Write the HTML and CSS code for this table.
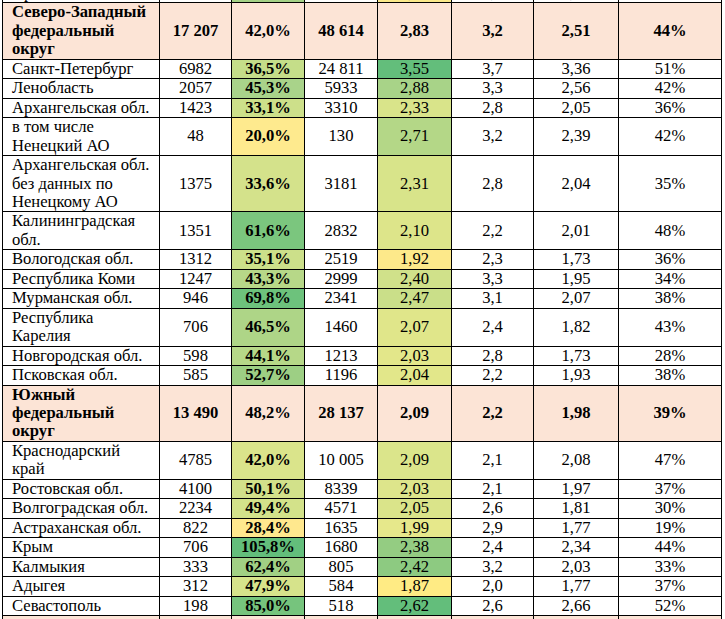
FILE: index.html
```html
<!DOCTYPE html>
<html lang="ru">
<head>
<meta charset="utf-8">
<title>Таблица</title>
<link rel="stylesheet" href="styles.css">
</head>
<body>
<table class="grid">
  <colgroup>
    <col class="c-name"><col class="c-a"><col class="c-b"><col class="c-c"><col class="c-d"><col class="c-e"><col class="c-f"><col class="c-g">
  </colgroup>
  <tbody>
    <tr>
      <td class="name">Орловская обл.</td><td>502</td><td class="pct" style="background:#a4d186">52,3%</td><td>1016</td><td style="background:#fbe98a">2,02</td><td>2,2</td><td>1,99</td><td>40%</td>
    </tr>
    <tr class="district">
      <td class="name">Северо-Западный<br>федеральный<br>округ</td><td>17 207</td><td>42,0%</td><td>48 614</td><td>2,83</td><td>3,2</td><td>2,51</td><td>44%</td>
    </tr>
    <tr>
      <td class="name">Санкт-Петербург</td><td>6982</td><td class="pct" style="background:#c5de89">36,5%</td><td>24 811</td><td style="background:#63be7b">3,55</td><td>3,7</td><td>3,36</td><td>51%</td>
    </tr>
    <tr>
      <td class="name">Ленобласть</td><td>2057</td><td class="pct" style="background:#a9d38a">45,3%</td><td>5933</td><td style="background:#a8d388">2,88</td><td>3,3</td><td>2,56</td><td>42%</td>
    </tr>
    <tr>
      <td class="name">Архангельская обл.</td><td>1423</td><td class="pct" style="background:#cde08a">33,1%</td><td>3310</td><td style="background:#d9e48a">2,33</td><td>2,8</td><td>2,05</td><td>36%</td>
    </tr>
    <tr>
      <td class="name">в том числе<br>Ненецкий АО</td><td>48</td><td class="pct" style="background:#feea8e">20,0%</td><td>130</td><td style="background:#b4d787">2,71</td><td>3,2</td><td>2,39</td><td>42%</td>
    </tr>
    <tr>
      <td class="name">Архангельская обл.<br>без данных по<br>Ненецкому АО</td><td>1375</td><td class="pct" style="background:#d4e28b">33,6%</td><td>3181</td><td style="background:#d8e48a">2,31</td><td>2,8</td><td>2,04</td><td>35%</td>
    </tr>
    <tr>
      <td class="name">Калининградская<br>обл.</td><td>1351</td><td class="pct" style="background:#7bc67e">61,6%</td><td>2832</td><td style="background:#dde58a">2,10</td><td>2,2</td><td>2,01</td><td>48%</td>
    </tr>
    <tr>
      <td class="name">Вологодская обл.</td><td>1312</td><td class="pct" style="background:#cce08a">35,1%</td><td>2519</td><td style="background:#fde98a">1,92</td><td>2,3</td><td>1,73</td><td>36%</td>
    </tr>
    <tr>
      <td class="name">Республика Коми</td><td>1247</td><td class="pct" style="background:#b7d888">43,3%</td><td>2999</td><td style="background:#d0e18a">2,40</td><td>3,3</td><td>1,95</td><td>34%</td>
    </tr>
    <tr>
      <td class="name">Мурманская обл.</td><td>946</td><td class="pct" style="background:#6dc27c">69,8%</td><td>2341</td><td style="background:#cadf89">2,47</td><td>3,1</td><td>2,07</td><td>38%</td>
    </tr>
    <tr>
      <td class="name">Республика<br>Карелия</td><td>706</td><td class="pct" style="background:#aed587">46,5%</td><td>1460</td><td style="background:#e0e68a">2,07</td><td>2,4</td><td>1,82</td><td>43%</td>
    </tr>
    <tr>
      <td class="name">Новгородская обл.</td><td>598</td><td class="pct" style="background:#b6d888">44,1%</td><td>1213</td><td style="background:#e3e78a">2,03</td><td>2,8</td><td>1,73</td><td>28%</td>
    </tr>
    <tr>
      <td class="name">Псковская обл.</td><td>585</td><td class="pct" style="background:#9dcf84">52,7%</td><td>1196</td><td style="background:#e2e78a">2,04</td><td>2,2</td><td>1,93</td><td>38%</td>
    </tr>
    <tr class="district">
      <td class="name">Южный<br>федеральный<br>округ</td><td>13 490</td><td>48,2%</td><td>28 137</td><td>2,09</td><td>2,2</td><td>1,98</td><td>39%</td>
    </tr>
    <tr>
      <td class="name">Краснодарский<br>край</td><td>4785</td><td class="pct" style="background:#dae48b">42,0%</td><td>10 005</td><td style="background:#dbe58b">2,09</td><td>2,1</td><td>2,08</td><td>47%</td>
    </tr>
    <tr>
      <td class="name">Ростовская обл.</td><td>4100</td><td class="pct" style="background:#d2e18a">50,1%</td><td>8339</td><td style="background:#dde58b">2,03</td><td>2,1</td><td>1,97</td><td>37%</td>
    </tr>
    <tr>
      <td class="name">Волгоградская обл.</td><td>2234</td><td class="pct" style="background:#d3e28a">49,4%</td><td>4571</td><td style="background:#dae48a">2,05</td><td>2,6</td><td>1,81</td><td>30%</td>
    </tr>
    <tr>
      <td class="name">Астраханская обл.</td><td>822</td><td class="pct" style="background:#ffe88e">28,4%</td><td>1635</td><td style="background:#e6e88b">1,99</td><td>2,9</td><td>1,77</td><td>19%</td>
    </tr>
    <tr>
      <td class="name">Крым</td><td>706</td><td class="pct" style="background:#63be7b">105,8%</td><td>1680</td><td style="background:#94cc82">2,38</td><td>2,4</td><td>2,34</td><td>44%</td>
    </tr>
    <tr>
      <td class="name">Калмыкия</td><td>333</td><td class="pct" style="background:#a1d084">62,4%</td><td>805</td><td style="background:#8dca81">2,42</td><td>3,2</td><td>2,03</td><td>33%</td>
    </tr>
    <tr>
      <td class="name">Адыгея</td><td>312</td><td class="pct" style="background:#d6e38b">47,9%</td><td>584</td><td style="background:#ffeb84">1,87</td><td>2,0</td><td>1,77</td><td>37%</td>
    </tr>
    <tr>
      <td class="name">Севастополь</td><td>198</td><td class="pct" style="background:#76c47d">85,0%</td><td>518</td><td style="background:#63be7b">2,62</td><td>2,6</td><td>2,66</td><td>52%</td>
    </tr>
    <tr class="district tail">
      <td class="name">Северо-Кавказский<br>федеральный<br>округ</td><td>6 510</td><td>41,5%</td><td>12 233</td><td>1,88</td><td>2,1</td><td>1,80</td><td>35%</td>
    </tr>
  </tbody>
</table>
</body>
</html>
```

FILE: styles.css
```css
html, body {
  margin: 0;
  padding: 0;
  background: #ffffff;
}

body {
  overflow: hidden;
}

.grid {
  margin: -17px 0 0 2px;
  border-collapse: collapse;
  table-layout: fixed;
  width: 720px;
  font-family: "Liberation Serif", "Times New Roman", serif;
  font-size: 16.6px;
  line-height: 18.45px;
  color: #000000;
}

.c-name { width: 157px; }
.c-a { width: 72px; }
.c-b { width: 73px; }
.c-c { width: 73px; }
.c-d { width: 74px; }
.c-e { width: 82px; }
.c-f { width: 85px; }
.c-g { width: 103px; }

.grid td {
  border: 1px solid #000000;
  padding: 0 4px;
  text-align: center;
  vertical-align: middle;
  white-space: nowrap;
  overflow: hidden;
}

.grid td.name {
  text-align: left;
  padding: 0 4px 0 9px;
}

.grid td.pct {
  font-weight: bold;
}

.district td {
  background: #fce4d6;
  font-weight: bold;
}

.tail td.name {
  padding-top: 4px;
}
```
